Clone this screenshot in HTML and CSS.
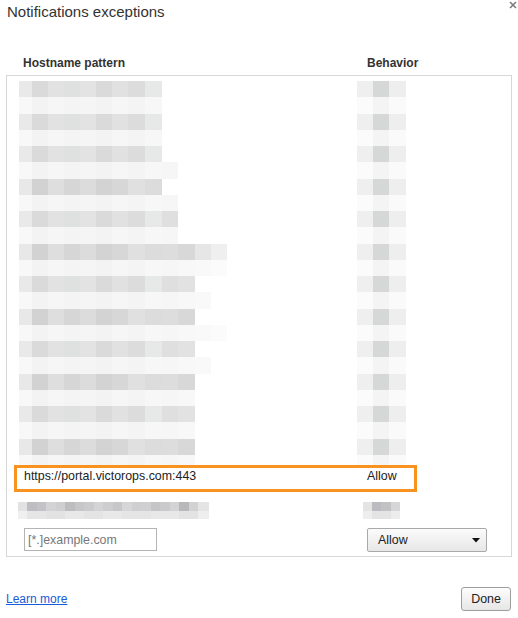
FILE: index.html
```html
<!DOCTYPE html>
<html>
<head>
<meta charset="utf-8">
<title>Notifications exceptions</title>
<link rel="stylesheet" href="styles.css">
</head>
<body>
<div class="dialog">
  <div class="topbar">
    <h1 class="title">Notifications exceptions</h1>
    <svg class="close" width="8" height="8" viewBox="0 0 8 8"><path d="M1 1L7 7M7 1L1 7" stroke="#7b7b7b" stroke-width="1.6" fill="none"/></svg>
  </div>

  <div class="col-headers">
    <div>Hostname pattern</div>
    <div>Behavior</div>
  </div>

  <div class="list">
    <div class="blurred">
      <div class="brow"><div class="host"><div class="d w143"></div><div class="l w143"></div></div><div class="beh"><div class="d"></div><div class="l"></div></div></div>
      <div class="brow"><div class="host"><div class="d w143"></div><div class="l w143"></div></div><div class="beh"><div class="d"></div><div class="l"></div></div></div>
      <div class="brow"><div class="host"><div class="d w143"></div><div class="l w159"></div></div><div class="beh"><div class="d"></div><div class="l"></div></div></div>
      <div class="brow"><div class="host alt"><div class="d w143"></div><div class="l w159"></div></div><div class="beh"><div class="d"></div><div class="l"></div></div></div>
      <div class="brow"><div class="host"><div class="d w159"></div><div class="l w159"></div></div><div class="beh"><div class="d"></div><div class="l"></div></div></div>
      <div class="brow"><div class="host alt"><div class="d w208"></div><div class="l w208"></div></div><div class="beh"><div class="d"></div><div class="l"></div></div></div>
      <div class="brow"><div class="host"><div class="d w176"></div><div class="l w192"></div></div><div class="beh"><div class="d"></div><div class="l"></div></div></div>
      <div class="brow"><div class="host alt"><div class="d w176"></div><div class="l w208"></div></div><div class="beh"><div class="d"></div><div class="l"></div></div></div>
      <div class="brow"><div class="host"><div class="d w176"></div><div class="l w192"></div></div><div class="beh"><div class="d"></div><div class="l"></div></div></div>
      <div class="brow"><div class="host alt"><div class="d w176"></div><div class="l w176"></div></div><div class="beh"><div class="d"></div><div class="l"></div></div></div>
      <div class="brow"><div class="host"><div class="d w176"></div><div class="l w176"></div></div><div class="beh"><div class="d"></div><div class="l"></div></div></div>
      <div class="brow"><div class="host alt"><div class="d w176"></div><div class="l w176"></div></div><div class="beh"><div class="d"></div><div class="l"></div></div></div>
    </div>

    <div class="highlight">
      <div class="hl-host">https://portal.victorops.com:443</div>
      <div class="hl-beh">Allow</div>
    </div>

    <div class="brow2">
      <div class="host2"><div class="d"></div><div class="l"></div></div>
      <div class="beh2"><div class="d"></div><div class="l"></div></div>
    </div>

    <div class="new-row">
      <input class="pattern" type="text" placeholder="[*.]example.com">
      <div class="select">
        <span>Allow</span>
        <svg width="8" height="5" viewBox="0 0 8 5"><path d="M0 0H8L4 4.5Z" fill="#111"/></svg>
      </div>
    </div>
  </div>

  <div class="footer">
    <a class="learn" href="#">Learn more</a>
    <button class="done">Done</button>
  </div>
</div>
</body>
</html>
```

FILE: styles.css
```css
* { box-sizing: border-box; }

html, body {
  margin: 0;
  padding: 0;
  background: #ffffff;
}

body {
  width: 518px;
  height: 618px;
  overflow: hidden;
  font-family: "Liberation Sans", Arial, Helvetica, sans-serif;
  color: #222;
}

.topbar {
  display: flex;
  justify-content: space-between;
  align-items: flex-start;
}

.title {
  margin: 3px 0 0 7px;
  font-size: 15px;
  line-height: 18px;
  font-weight: normal;
  color: #333;
}

.close {
  margin: 1px 1px 0 0;
}

.col-headers {
  display: grid;
  grid-template-columns: 344px auto;
  padding-left: 23px;
  margin-top: 35px;
  font-size: 12px;
  line-height: 15px;
  font-weight: bold;
  color: #333;
}

.list {
  margin: 4px 0 0 6px;
  width: 506px;
  height: 482px;
  border: 1px solid #d7d7d7;
  padding-top: 5px;
}

.blurred {
  height: 384px;
  overflow: hidden;
}

.brow {
  display: grid;
  grid-template-columns: 338px 49px;
  margin-left: 12px;
  height: 32.5px;
}

.host .d, .host .l, .beh .d, .beh .l {
  height: 16.25px;
}

.w143 { width: 143px; }
.w159 { width: 159px; }
.w176 { width: 176px; }
.w192 { width: 192px; }
.w208 { width: 208px; }

.host .d {
  background: linear-gradient(to right,
    #e9e9e9 0 13px, #dadada 13px 29px, #e2e2e2 29px 45px, #dfe0e0 45px 61px,
    #e3e3e3 61px 77px, #dadada 77px 93px, #e1e1e1 93px 109px, #dcdcdc 109px 126px,
    #e7e8e8 126px 143px, #dfdfdf 143px 159px, #e2e2e2 159px 176px, #dedede 176px 192px,
    #ececec 192px 208px);
}

.host.alt .d {
  background: linear-gradient(to right,
    #e8e8e8 0 13px, #d2d2d2 13px 29px, #dedede 29px 45px, #d6d6d6 45px 61px,
    #dcdcdc 61px 77px, #d3d3d3 77px 93px, #d7d7d7 93px 109px, #e0e0e0 109px 126px,
    #dcdcdc 126px 143px, #dddddd 143px 159px, #d8d8d8 159px 176px, #e6e6e6 176px 192px,
    #efefef 192px 208px);
}

.host .l {
  background: linear-gradient(to right,
    #f8f8f8 0 13px, #f3f3f3 13px 29px, #f6f6f6 29px 45px, #f4f4f4 45px 61px,
    #f5f5f5 61px 77px, #f3f3f3 77px 93px, #f6f6f6 93px 109px, #f4f4f4 109px 126px,
    #f7f7f7 126px 143px, #f6f6f6 143px 159px, #f8f8f8 159px 176px, #f9f9f9 176px 192px,
    #fbfbfb 192px 208px);
}

.beh .d {
  width: 49px;
  background: linear-gradient(to right, #efefef 0 16px, #d6d7d7 16px 32px, #eeeeee 32px 49px);
}

.beh .l {
  width: 49px;
  background: linear-gradient(to right, #fbfbfb 0 16px, #f4f4f4 16px 32px, #fafafa 32px 49px);
}

.highlight {
  display: grid;
  grid-template-columns: 343px auto;
  margin-left: 7px;
  width: 403px;
  height: 27px;
  border: 3px solid #f7931e;
  padding: 1px 0 0 7px;
  font-size: 12.4px;
  line-height: 15px;
  color: #222;
}

.brow2 {
  display: grid;
  grid-template-columns: 345px 37px;
  margin: 10px 0 0 11px;
}

.host2 .d, .host2 .l, .beh2 .d, .beh2 .l {
  height: 8.5px;
}

.host2 .d {
  width: 191px;
  background: linear-gradient(to right,
    #e2e2e2 0 9px, #bebec2 9px 19px, #c3c3c6 19px 28px, #d3d3d5 28px 38px,
    #cfcfd1 38px 47px, #bdbdc0 47px 57px, #c6c6c8 57px 66px, #cbcbcd 66px 76px,
    #d4d4d6 76px 85px, #cdcdd0 85px 95px, #c7c7c9 95px 104px, #d6d6d8 104px 114px,
    #cfcfd1 114px 123px, #d0d0d2 123px 133px, #c5c5c8 133px 142px, #cacacc 142px 152px,
    #d3d3d5 152px 161px, #b8b8bb 161px 171px, #d2d2d4 171px 180px, #e4e4e4 180px 191px);
}

.host2 .l {
  width: 191px;
  background: linear-gradient(to right,
    #f0f0f0 0 9px, #e6e6e6 9px 28px, #e2e2e2 28px 47px, #e8e8e8 47px 66px,
    #e4e4e4 66px 85px, #e9e9e9 85px 104px, #e5e5e5 104px 133px, #e8e8e8 133px 161px,
    #e3e3e3 161px 180px, #eeeeee 180px 191px);
}

.beh2 .d {
  width: 37px;
  background: linear-gradient(to right, #e4e4e4 0 9px, #bcbcc0 9px 18px, #c2c2c5 18px 28px, #d6d6d8 28px 37px);
}

.beh2 .l {
  width: 37px;
  background: linear-gradient(to right, #eeeeee 0 9px, #e4e4e4 9px 28px, #ececec 28px 37px);
}

.new-row {
  display: grid;
  grid-template-columns: 343px 120px;
  margin: 9px 0 0 17px;
  align-items: start;
}

.pattern {
  width: 133px;
  height: 23px;
  margin: 0;
  border: 1px solid #b4b4b4;
  padding: 0 3px;
  font-family: "Liberation Sans", Arial, sans-serif;
  font-size: 12.4px;
  color: #222;
  outline: none;
}

.pattern::placeholder {
  color: #777;
}

.select {
  width: 120px;
  height: 24px;
  display: flex;
  justify-content: space-between;
  align-items: center;
  padding: 0 6px 0 10px;
  border: 1px solid #a9a9a9;
  border-radius: 2px;
  background: linear-gradient(#fbfbfb, #e7e7e7);
  font-size: 12.4px;
  color: #222;
}

.footer {
  display: flex;
  justify-content: space-between;
  align-items: center;
  margin-top: 30px;
  padding: 0 7px 0 6px;
}

.learn {
  font-size: 12px;
  line-height: 15px;
  color: #1a5bd8;
  text-decoration: underline;
}

.done {
  width: 50px;
  height: 24px;
  margin: 0;
  padding: 0;
  border: 1px solid #9d9d9d;
  border-radius: 3px;
  background: linear-gradient(#fdfdfd, #e6e6e6);
  font-family: "Liberation Sans", Arial, sans-serif;
  font-size: 12.4px;
  color: #222;
}
```
